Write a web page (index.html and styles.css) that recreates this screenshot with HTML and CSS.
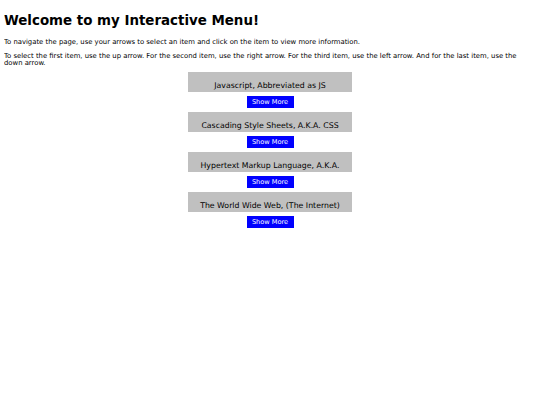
FILE: index.html
```html
<!DOCTYPE html>
<html>
<head>
<meta charset="utf-8">
<title>Interactive Menu</title>
<link rel="stylesheet" href="styles.css">
</head>
<body>
<h1 class="title">Welcome to my Interactive Menu!</h1>
<p class="intro">To navigate the page, use your arrows to select an item and click on the item to view more information.</p>
<p class="intro">To select the first item, use the up arrow. For the second item, use the right arrow. For the third item, use the left arrow. And for the last item, use the down arrow.</p>
<div class="menu">
  <div class="item">
    <div class="item-label">Javascript, Abbreviated as JS</div>
    <button class="more">Show More</button>
  </div>
  <div class="item">
    <div class="item-label">Cascading Style Sheets, A.K.A. CSS</div>
    <button class="more">Show More</button>
  </div>
  <div class="item">
    <div class="item-label">Hypertext Markup Language, A.K.A.</div>
    <button class="more">Show More</button>
  </div>
  <div class="item">
    <div class="item-label">The World Wide Web, (The Internet)</div>
    <button class="more">Show More</button>
  </div>
</div>
</body>
</html>
```
FILE: styles.css
```css
html, body {
  background: #ffffff;
}
body {
  margin: 4px;
  font-family: "DejaVu Sans", Verdana, sans-serif;
  font-size: 6.85px;
  color: #000000;
}
.title {
  font-size: 13.4px;
  font-weight: bold;
  margin: 9.4px 0 9.5px;
  line-height: 16px;
}
.intro {
  margin: 6.5px 0 0;
  line-height: 7.5px;
}
.menu {
  display: flex;
  flex-direction: column;
  align-items: center;
  gap: 4px;
  margin-top: 4.6px;
}
.item {
  display: flex;
  flex-direction: column;
  align-items: center;
  gap: 4px;
}
.item-label {
  box-sizing: border-box;
  width: 164px;
  height: 20px;
  padding-top: 8.8px;
  background: #c0c0c0;
  font-size: 7.8px;
  line-height: 9px;
  text-align: center;
  color: #000;
}
.more {
  box-sizing: border-box;
  width: 47px;
  height: 12px;
  padding: 0;
  border: none;
  background: #0000ff;
  color: #ffffff;
  font-family: "DejaVu Sans", Verdana, sans-serif;
  font-size: 6.6px;
  line-height: 12px;
}
```
